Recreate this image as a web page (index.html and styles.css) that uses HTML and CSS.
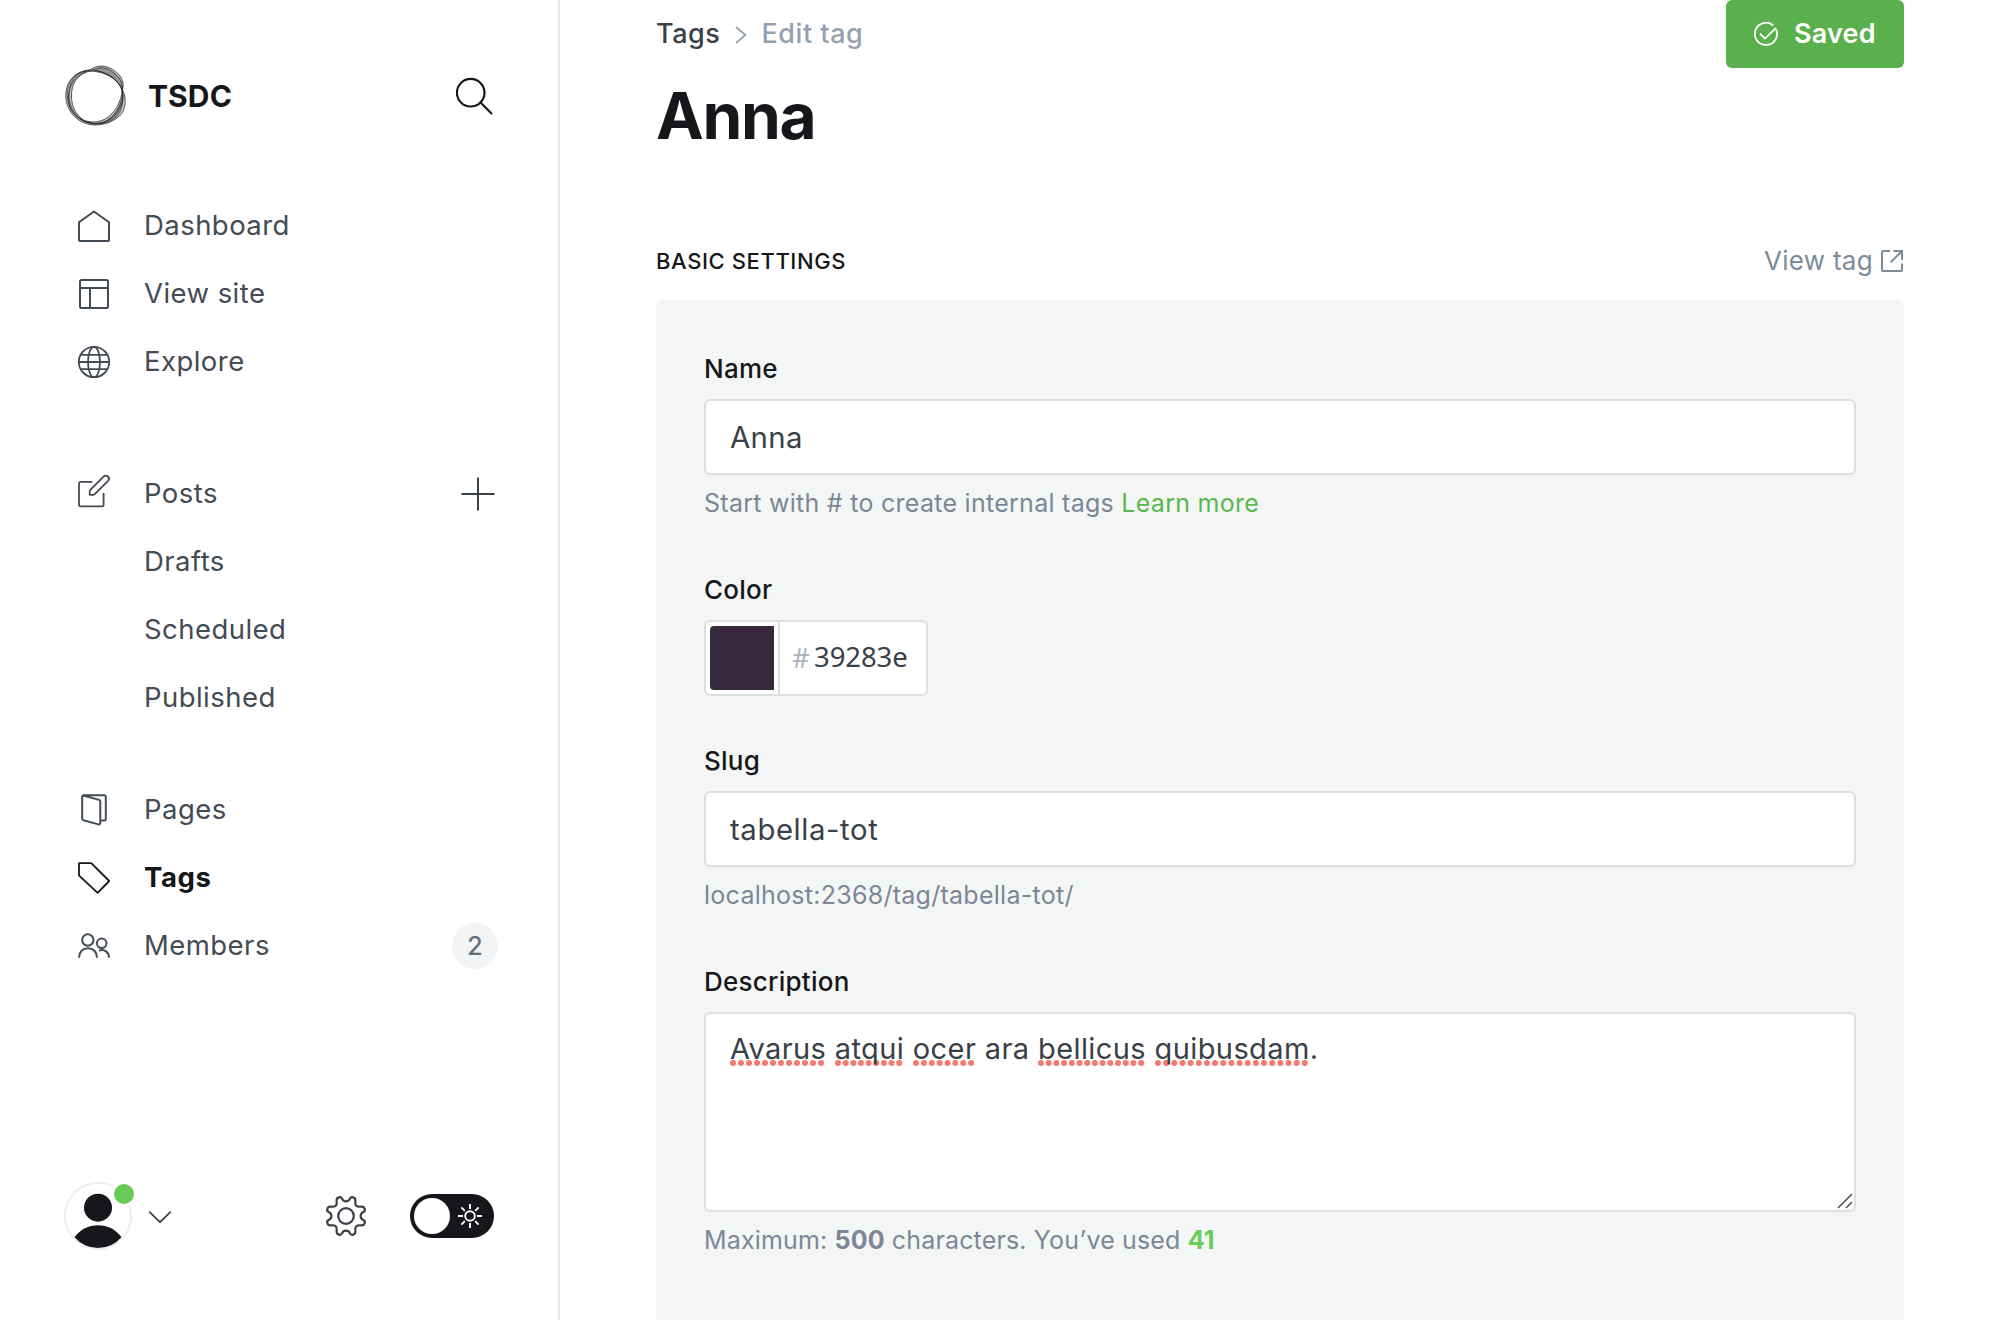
FILE: index.html
```
<!DOCTYPE html>
<html lang="en">
<head>
<meta charset="utf-8">
<title>TSDC – Edit tag</title>
<link rel="stylesheet" href="styles.css">
</head>
<body>
<div class="app">
  <aside class="sidebar">
    <header class="brand">
      <svg class="brand-logo" viewBox="0 0 62 62" width="62" height="62">
        <g fill="#333" fill-opacity=".3" fill-rule="evenodd" stroke="#222" stroke-width=".9" stroke-opacity=".8">
          <path d="M25 5C32-.5 42 0 49 5.5C57 11 59.5 17 57.5 25C56 37 50 48 41 53.5C30 60 15 57 7.5 47C0 36 1 20 9 12C14 7 19 5.5 25 5ZM25 5C34 5 45 9 51 15.500C55 20 56.500 22 57.500 25C62 34 61 45 54.500 51C47 57.500 39 60 30 60C14 60 1 47 .8 31C.5 16 11 6 25 5Z"/>
          <path d="M26 6C33 1.500 42 1.500 49 8C55.500 13 58 19 57.500 26C58 37 52 49 42 55.500C30 61.500 15 58 7 46C0 34 4 17 12 10C16 7 20 6 26 6ZM25 6C34 6.500 45 9 52 17C56 21 56.500 23 57 26C59 35 57 46 51 52C44 57.500 38 59 30 58.500C16 58 7 46 6.500 32C6 19 12 9 25 6Z"/>
          <path fill="none" d="M22 6.500C10 11 3.500 20 4 32C5 47 16 58.500 30 59C41 59 50 52 54 44C60 34 58.500 27 54.500 20C49 12 40 7 30 5.500"/>
        </g>
      </svg>
      <span class="brand-name">TSDC</span>
      <svg class="search" viewBox="0 0 38 38" width="38" height="38" fill="none" stroke="#15171a" stroke-width="2.2">
        <circle cx="14.7" cy="15.7" r="13.8"/><path d="M24.6 25.4 35.4 36.4" stroke-linecap="round"/>
      </svg>
    </header>

    <nav class="nav">
      <ul class="nav-group">
        <li class="nav-item">
          <svg class="icon" viewBox="0 0 32 32"><path d="M1 12.2 16 1.5 31 12.2V29.4a1.6 1.6 0 0 1-1.6 1.6H2.6A1.6 1.6 0 0 1 1 29.4Z"/></svg>
          <span>Dashboard</span>
        </li>
        <li class="nav-item">
          <svg class="icon" viewBox="0 0 32 32"><rect x="2" y="2" width="28" height="28" rx="1.6"/><path d="M2 10H30M12 10V30"/></svg>
          <span>View site</span>
        </li>
        <li class="nav-item">
          <svg class="icon icon-fine" viewBox="0 0 32 32"><circle cx="16" cy="16" r="15.2"/><ellipse cx="16" cy="16" rx="6" ry="15.2"/><path d="M2.6 8.8H29.4M1 16H31M2.6 23.2H29.4"/></svg>
          <span>Explore</span>
        </li>
      </ul>
      <ul class="nav-group nav-posts">
        <li class="nav-item">
          <svg class="icon icon-fine" viewBox="0 0 32 32"><path d="M14.3 3.8H2.6A1.6 1.6 0 0 0 1 5.4V26.8a1.6 1.6 0 0 0 1.6 1.6H24A1.6 1.6 0 0 0 25.6 26.8V15M11.7 16.8V13.4q0-1 .8-1.8L25.6-1.3a2.9 2.9 0 0 1 4.5 4.1L17 15.8q-.9 1-2 1Z"/></svg>
          <span>Posts</span>
          <svg class="plus" viewBox="0 0 34 34" width="34" height="34"><path d="M17 .5V33.5M.5 17H33.5"/></svg>
        </li>
        <li class="nav-item nav-sub">Drafts</li>
        <li class="nav-item nav-sub">Scheduled</li>
        <li class="nav-item nav-sub">Published</li>
      </ul>
      <ul class="nav-group nav-content">
        <li class="nav-item">
          <svg class="icon" viewBox="0 0 32 32"><path d="M23 26.6H26.4A1.4 1.4 0 0 0 27.8 25.2V2.7A1.4 1.4 0 0 0 26.4 1.3H5.6A1.4 1.4 0 0 0 4.2 2.7V24.8A1.6 1.6 0 0 0 5.4 26.3L20.4 30.4A1.5 1.5 0 0 0 22.3 29V7.4A1.6 1.6 0 0 0 21.1 5.9L5.2 1.5"/></svg>
          <span>Pages</span>
        </li>
        <li class="nav-item active">
          <svg class="icon icon-fine" viewBox="0 0 32 32"><path d="M1 1.2H12.8a1.5 1.5 0 0 1 1 .4L31.2 19 19.6 30.8 1.4 13.9a1.5 1.5 0 0 1-.4-1Z"/></svg>
          <span>Tags</span>
        </li>
        <li class="nav-item">
          <svg class="icon" viewBox="0 0 32 32"><circle cx="9.8" cy="10" r="5.7"/><circle cx="23.7" cy="13.3" r="4.8"/><path d="M1 27.7C1 22 4.8 18.2 10 18.2S19 22 19 27.7M21 20.5C26.5 18.8 31 22 31 27.7"/></svg>
          <span>Members</span>
          <span class="badge">2</span>
        </li>
      </ul>
    </nav>

    <footer class="sidebar-footer">
      <div class="avatar">
        <svg viewBox="0 0 64 64" width="64" height="64" fill="#15171a"><circle cx="32" cy="23.7" r="14"/><path d="M8.5 53.2A29 29 0 0 1 55.5 53.2A31 31 0 0 1 8.5 53.2Z"/></svg>
        <span class="status"></span>
      </div>
      <svg class="chevron" viewBox="0 0 24 14" width="24" height="14"><path d="M1.2 1.6 12 12.2 22.8 1.6"/></svg>
      <svg class="gear" viewBox="-21 -21 42 42" width="42" height="42">
        <circle r="7.8"/>
        <path d="M0-14.6C2.8-14.6 3.4-16 4-17.4C5.2-20 9.6-18.8 9.4-15.4C9.2-12.6 8.8-11.7 10.3-10.3C11.7-8.8 12.6-9.2 15.4-9.4C18.8-9.6 20-5.2 17.4-4C16-3.4 14.6-2.8 14.6 0C14.6 2.8 16 3.4 17.4 4C20 5.2 18.8 9.6 15.4 9.4C12.6 9.2 11.7 8.8 10.3 10.3C8.8 11.7 9.2 12.6 9.4 15.4C9.6 18.8 5.2 20 4 17.4C3.4 16 2.8 14.6 0 14.6C-2.8 14.6-3.4 16-4 17.4C-5.2 20-9.6 18.8-9.4 15.4C-9.2 12.6-8.8 11.7-10.3 10.3C-11.7 8.8-12.6 9.2-15.4 9.4C-18.8 9.6-20 5.2-17.4 4C-16 3.4-14.6 2.8-14.6 0C-14.6-2.8-16-3.4-17.4-4C-20-5.2-18.8-9.6-15.4-9.4C-12.6-9.2-11.7-8.8-10.3-10.3C-8.8-11.7-9.2-12.6-9.4-15.4C-9.6-18.8-5.2-20-4-17.4C-3.4-16-2.8-14.6 0-14.6Z"/>
      </svg>
      <div class="toggle">
        <span class="knob"></span>
        <svg viewBox="-12 -12 24 24" width="24" height="24" fill="none" stroke="#fff" stroke-width="1.9"><circle r="4.8"/><path d="M0-12V-7M0 12V7M-12 0H-7M12 0H7M-8.6-8.6-5.2-5.2M8.6 8.6 5.2 5.2M-8.6 8.6-5.2 5.2M8.6-8.6 5.2-5.2"/></svg>
      </div>
    </footer>
  </aside>

  <main class="main">
    <header class="topbar">
      <div class="crumbs">
        <span class="crumb-link">Tags</span>
        <svg viewBox="0 0 12 18" width="12" height="18"><path d="M1 1 10.4 9 1 17"/></svg>
        <span class="crumb-here">Edit tag</span>
      </div>
      <button class="save" type="button">
        <svg viewBox="0 0 24 24" width="24" height="24"><path d="M19.4 3.6A11.1 11.1 0 1 0 22.2 7.6M6 11.6 11 16.6 22 5.8"/></svg>
        <span>Saved</span>
      </button>
    </header>
    <h1 class="title">Anna</h1>

    <div class="section-head">
      <h2 class="section-title">BASIC SETTINGS</h2>
      <a class="view-link"><span>View tag</span>
        <svg viewBox="0 0 22 22" width="22" height="22"><path d="M9 1H2A1 1 0 0 0 1 2V20A1 1 0 0 0 2 21H20A1 1 0 0 0 21 20V13.5M12.4 1H21V10M9.6 12.4 20.6 1.4"/></svg>
      </a>
    </div>

    <form class="panel">
      <div class="field">
        <label class="label">Name</label>
        <div class="input">Anna</div>
        <p class="hint">Start with # to create internal tags <a class="learn">Learn more</a></p>
      </div>
      <div class="field">
        <label class="label">Color</label>
        <div class="color">
          <span class="swatch-cell"><span class="swatch"></span></span>
          <span class="hash">#</span><span class="hex">39283e</span>
        </div>
      </div>
      <div class="field">
        <label class="label">Slug</label>
        <div class="input slug">tabella-tot</div>
        <p class="hint">localhost:2368/tag/tabella-tot/</p>
      </div>
      <div class="field">
        <label class="label">Description</label>
        <div class="textarea"><span class="typo">Avarus</span> <span class="typo">atqui</span> <span class="typo">ocer</span> ara <span class="typo">bellicus</span> <span class="typo">quibusdam</span>.<svg class="resizer" viewBox="0 0 16 16" width="16" height="16"><path d="M1 15 15 1M9 15 15 9"/></svg></div>
        <p class="hint limit">Maximum: <b>500</b> characters. You’ve used <b class="count">41</b></p>
      </div>
    </form>
  </main>
</div>
</body>
</html>
```
FILE: styles.css
```
* { box-sizing: border-box; }

body {
  margin: 0;
  background: #fff;
  color: #15171a;
  font-family: Inter, "Liberation Sans", sans-serif;
  letter-spacing: .4px;
}

svg { display: block; flex: none; }
h1, h2, p, ul { margin: 0; padding: 0; }
ul { list-style: none; }

.app { display: flex; height: 1320px; overflow: hidden; }

/* Sidebar */
.sidebar {
  display: flex;
  flex-direction: column;
  width: 560px;
  flex: none;
  padding: 62px 64px 70px;
  border-right: 2px solid #e6e7e8;
}

.brand { display: flex; align-items: center; height: 68px; }
.brand-logo { margin-left: 1px; }
.brand-name { margin-left: 21px; font-size: 30px; font-weight: 700; letter-spacing: .1px; }
.search { margin-left: auto; margin-bottom: 1px; }

.nav { padding-top: 61px; font-size: 27.5px; letter-spacing: .45px; color: #434b54; }
.nav-posts { margin-top: 64px; }
.nav-content { margin-top: 44px; }
.nav-item { display: flex; align-items: center; height: 68px; padding-left: 14px; }
.nav-sub { padding-left: 80px; }
.icon {
  width: 32px;
  height: 32px;
  margin: 2px 34px 0 0;
  overflow: visible;
  fill: none;
  stroke: currentColor;
  stroke-width: 2;
  stroke-linejoin: round;
}
.icon-fine { stroke-width: 1.8; }
.plus { margin: 1px -1px 0 auto; fill: none; stroke: #394047; stroke-width: 2; }
.active { color: #15171a; font-weight: 700; letter-spacing: .6px; }
.badge {
  display: flex;
  align-items: center;
  justify-content: center;
  width: 46px;
  height: 46px;
  margin: 1px -4px 0 auto;
  border-radius: 50%;
  background: #f1f3f4;
  color: #626d79;
  font-size: 25px;
  font-weight: 500;
  letter-spacing: 0;
}

.sidebar-footer { display: flex; align-items: center; height: 68px; margin-top: auto; }
.avatar { position: relative; border: 2px solid #eceeee; border-radius: 50%; }
.status {
  position: absolute;
  top: 0;
  right: -4px;
  width: 20px;
  height: 20px;
  border-radius: 50%;
  background: #69cb58;
  box-shadow: 0 0 0 2px #fff;
}
.chevron { margin-left: 16px; margin-top: 1px; fill: none; stroke: #394047; stroke-width: 1.7; }
.gear { margin-left: auto; fill: none; stroke: #394047; stroke-width: 2.2; }
.toggle {
  display: flex;
  align-items: center;
  width: 84px;
  height: 44px;
  margin-left: 43px;
  padding: 0 12px 0 4px;
  justify-content: space-between;
  border-radius: 22px;
  background: #15171a;
}
.knob { width: 36px; height: 36px; border-radius: 50%; background: #fff; }

/* Main column */
.main { display: flex; flex-direction: column; flex: 1; padding: 0 96px; }

.topbar { display: flex; align-items: center; justify-content: space-between; height: 68px; flex: none; }
.crumbs { display: flex; align-items: center; padding-bottom: 2px; font-size: 27px; font-weight: 500; letter-spacing: .55px; }
.crumb-link { color: #394047; }
.crumb-here { color: #95a1b1; }
.crumbs svg { margin: 4px 14px 0 15px; fill: none; stroke: #95a1b1; stroke-width: 1.8; }

.save {
  display: flex;
  align-items: center;
  gap: 16px;
  width: 178px;
  height: 68px;
  padding: 0 0 0 28px;
  border: 0;
  border-radius: 6px;
  background: #5ab04c;
  color: #fff;
  font: 600 27px Inter, sans-serif;
  letter-spacing: .2px;
}
.save span { padding-bottom: 2px; }
.save svg { fill: none; stroke: #fff; stroke-width: 1.8; }

.title { margin-top: 9px; font-size: 64px; font-weight: 700; line-height: 78px; letter-spacing: -1.3px; }

.section-head { display: flex; align-items: center; justify-content: space-between; height: 78px; margin-top: 67px; flex: none; }
.section-title { font-size: 22px; font-weight: 500; letter-spacing: .6px; }
.view-link { display: flex; align-items: center; gap: 8px; margin-right: 1px; color: #7c8b9a; font-size: 26px; letter-spacing: .3px; }
.view-link span { padding-bottom: 2px; }
.view-link svg { fill: none; stroke: #7c8b9a; stroke-width: 2; }

.panel {
  display: flex;
  flex-direction: column;
  gap: 49px;
  flex: 1 0 auto;
  padding: 53px 48px 0;
  border-radius: 6px 6px 0 0;
  background: #f4f6f6;
}
.field { display: flex; flex-direction: column; }
.label { margin-bottom: 14px; font-size: 26px; font-weight: 500; line-height: 32px; letter-spacing: .25px; }

.input, .textarea, .color { border: 2px solid #dcdedf; border-radius: 6px; background: #fff; color: #394047; }
.input { height: 76px; padding: 1px 24px 0; font-size: 29.3px; line-height: 72px; }
.slug { letter-spacing: .6px; }
.textarea { position: relative; height: 200px; padding: 15px 24px; font-size: 29px; line-height: 40px; }
.typo { background: radial-gradient(circle at 3px 3px, #f47b72 2.7px, rgba(244, 123, 114, 0) 3.4px) 0 100% / 8px 6px; background-repeat: round no-repeat; }
.resizer { position: absolute; right: 1px; bottom: 1px; fill: none; stroke: #55585c; stroke-width: 1.7; }

.hint { margin: 13px 0 7px; color: #7b8796; font-size: 25px; line-height: 30px; letter-spacing: .27px; }
.limit { letter-spacing: .15px; }
.learn { color: #5ab84c; }
.hint b { font-weight: 700; }
.hint .count { color: #69cb58; }

.color {
  display: flex;
  align-items: center;
  width: 224px;
  height: 76px;
  font-family: "Noto Sans", sans-serif;
  font-size: 27.5px;
  letter-spacing: 0;
}
.swatch-cell { display: flex; align-items: center; height: 72px; padding: 0 4px; border-right: 2px solid #dcdedf; }
.swatch { width: 64px; height: 64px; border-radius: 4px 0 0 4px; background: #37293b; }
.hash { width: 22px; margin-left: 12px; padding-bottom: 2px; color: #abb4be; }
.hex { padding-bottom: 3px; letter-spacing: -.1px; }
```
